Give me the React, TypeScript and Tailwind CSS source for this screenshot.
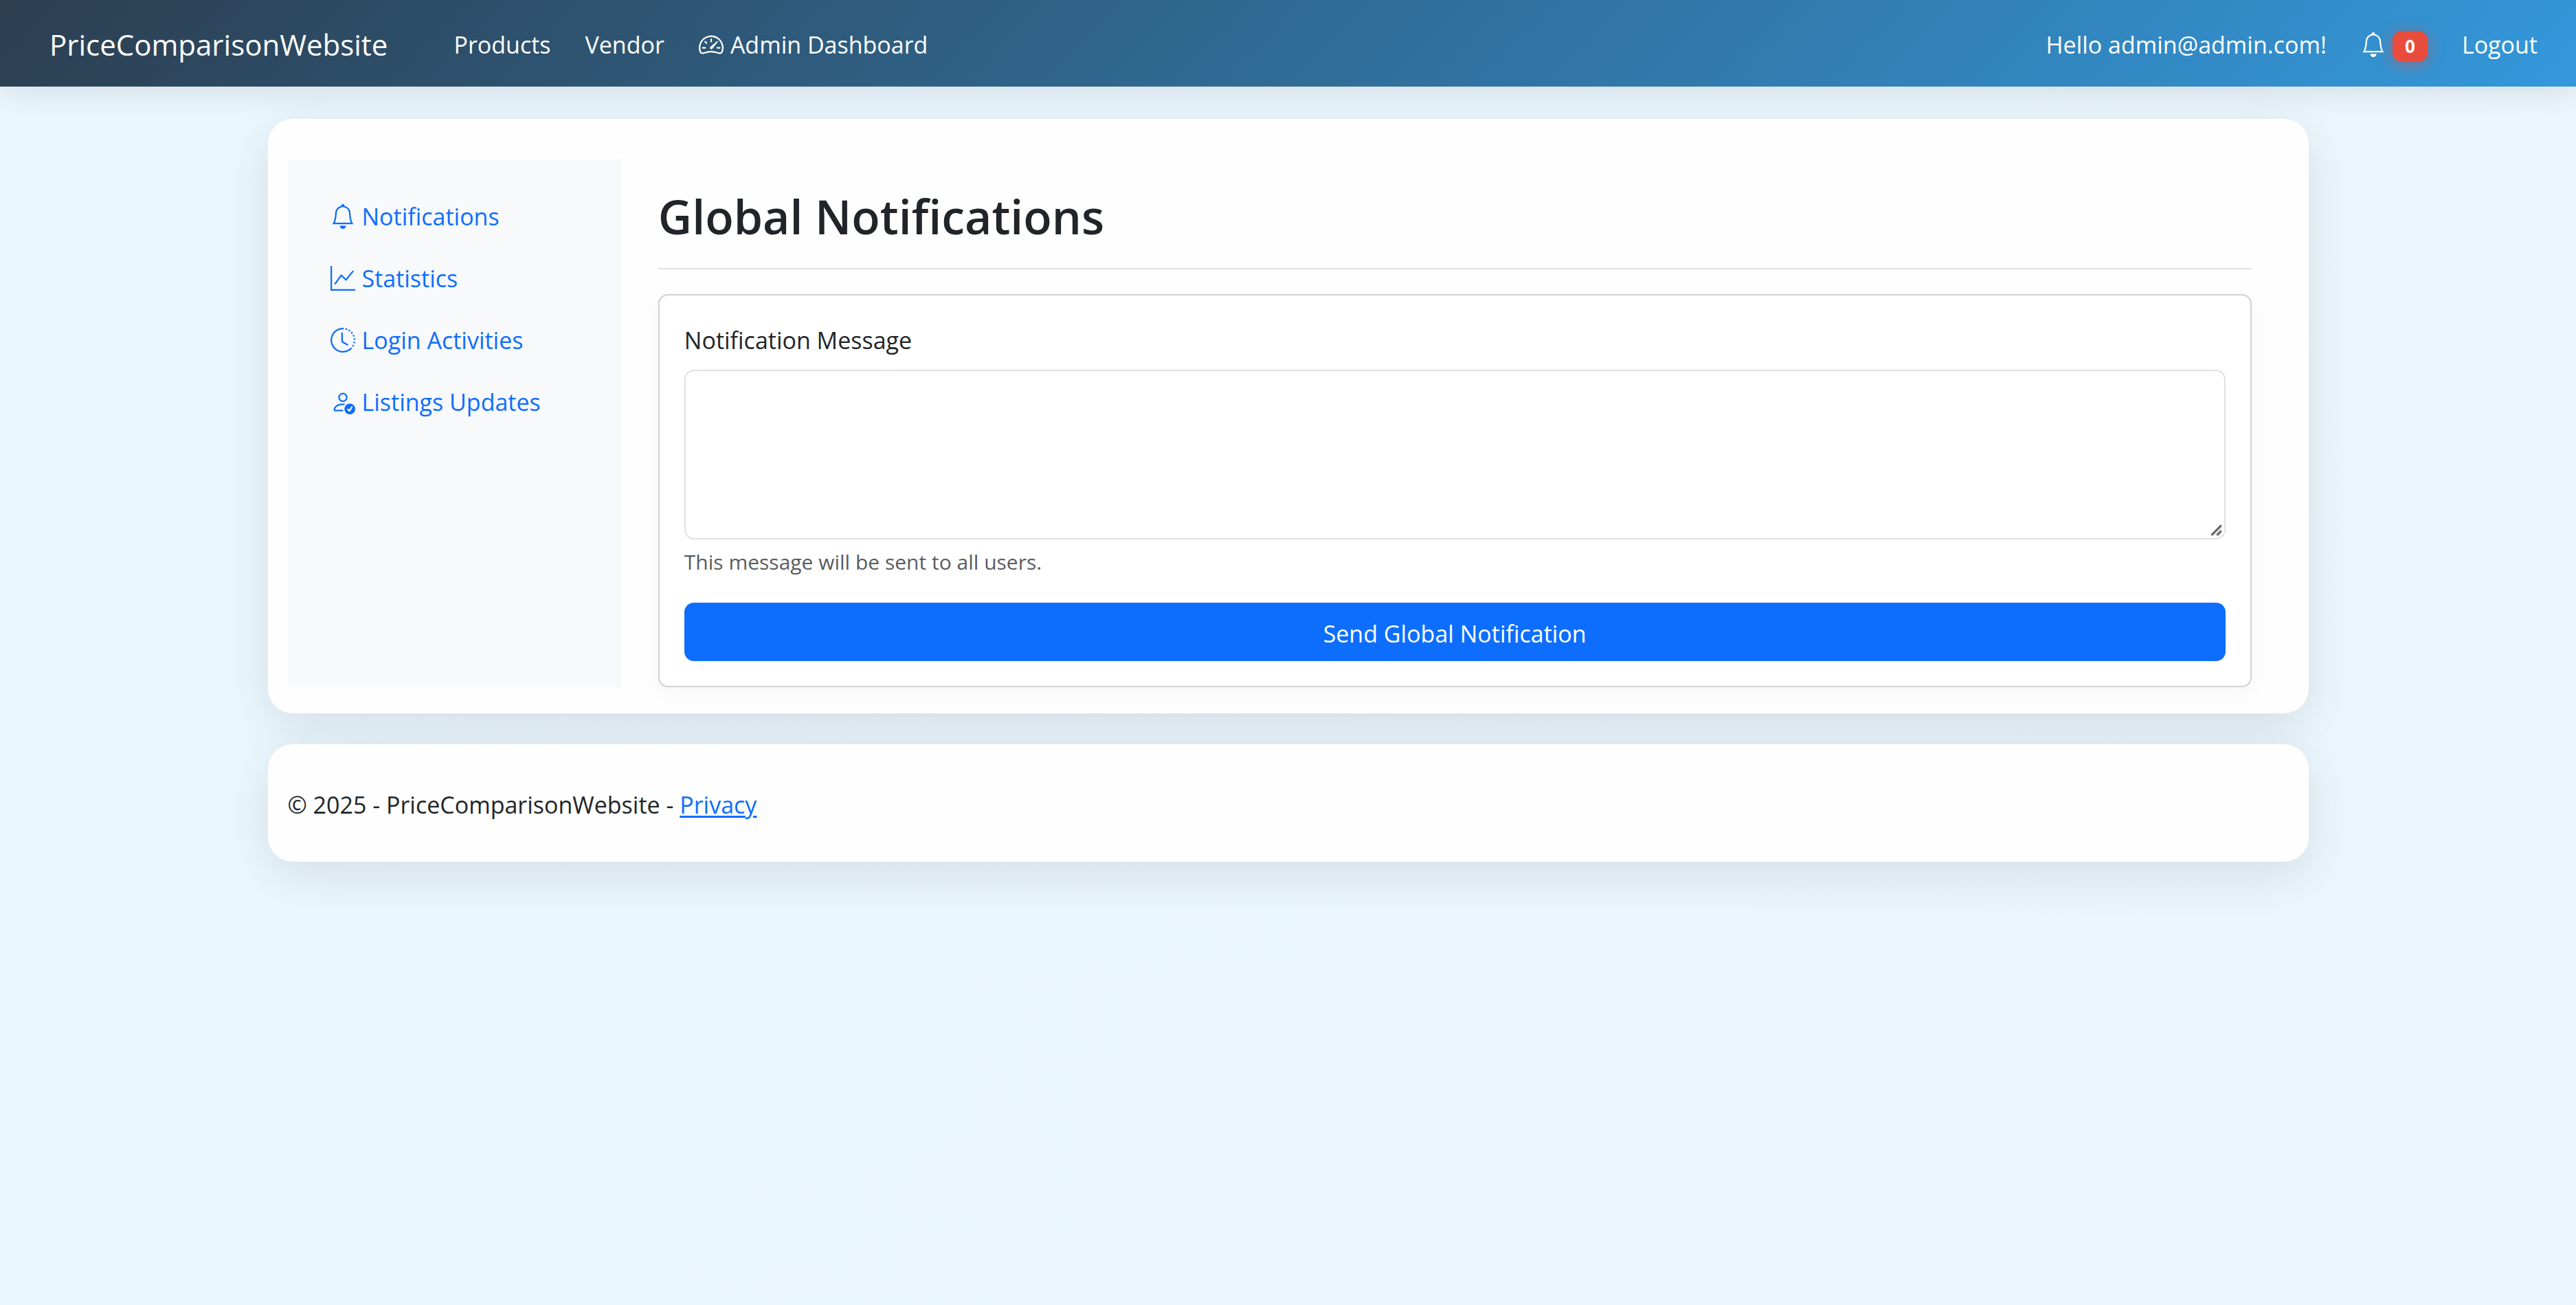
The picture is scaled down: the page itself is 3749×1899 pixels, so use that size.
import type { IconType } from "react-icons";
import { BsBell, BsClockHistory, BsGraphUp, BsPersonCheck, BsSpeedometer2 } from "react-icons/bs";

const sidebarLinks: { label: string; Icon: IconType }[] = [
  { label: "Notifications", Icon: BsBell },
  { label: "Statistics", Icon: BsGraphUp },
  { label: "Login Activities", Icon: BsClockHistory },
  { label: "Listings Updates", Icon: BsPersonCheck },
];

function Navbar() {
  return (
    <header className="relative flex h-[126px] items-center justify-between bg-[linear-gradient(135deg,#2c3e50,#3498db)] pt-1 pr-14 pl-[72px] text-white shadow-[0_9px_45px_rgba(0,0,0,0.1)]">
      <div className="flex items-center">
        <a href="#" className="mr-24 text-[42px] leading-[54px]">
          PriceComparisonWebsite
        </a>
        <nav aria-label="Main" className="flex items-center gap-[50px]">
          <a href="#products">Products</a>
          <a href="#vendor">Vendor</a>
          <a href="#admin" className="flex items-center gap-[10px]">
            <BsSpeedometer2 className="size-9" />
            Admin Dashboard
          </a>
        </nav>
      </div>
      <div className="flex items-center gap-[50px]">
        <a href="#account">Hello admin@admin.com!</a>
        <a href="#notifications" aria-label="Notifications" className="flex items-center gap-[10px]">
          <BsBell className="size-9" />
          <span className="mt-1 flex h-[45px] w-[51px] items-center justify-center rounded-[14px] bg-[#e74c3c] text-[26px] leading-none font-bold shadow-[0_4px_22px_rgba(231,76,60,0.5)]">
            0
          </span>
        </a>
        <button type="button">Logout</button>
      </div>
    </header>
  );
}

function Sidebar() {
  return (
    <nav aria-label="Admin" className="w-1/6 shrink-0 bg-[#f8f9fb] px-[62px] pt-[38px]">
      <ul>
        {sidebarLinks.map(({ label, Icon }) => (
          <li key={label}>
            <a href="#" className="flex items-center gap-[10px] py-[18px] whitespace-nowrap text-[#0d6efd]">
              <Icon className="size-9 shrink-0" />
              {label}
            </a>
          </li>
        ))}
      </ul>
    </nav>
  );
}

function ResizeGrip() {
  return (
    <svg
      viewBox="0 0 18 18"
      className="pointer-events-none absolute right-1 bottom-1 size-[18px]"
      fill="none"
      strokeLinecap="round"
      aria-hidden="true"
    >
      <path d="M4 16 16 4M12 16l4-4" stroke="#cfcfcf" strokeWidth="2" />
      <path d="M2 15 15 2M10 15l5-5" stroke="#5f5f5f" strokeWidth="2.6" />
    </svg>
  );
}

function NotificationForm() {
  return (
    <form className="rounded-[14px] border-2 border-[#d2d2d2] bg-white px-9 pt-[38px] pb-9 shadow-[0_9px_27px_rgba(0,0,0,0.04)]">
      <label htmlFor="message" className="mb-4 block">
        Notification Message
      </label>
      <div className="relative">
        <textarea
          id="message"
          aria-describedby="message-help"
          className="block h-[247px] w-full resize-none rounded-[14px] border-2 border-[#dee2e6] bg-white px-[27px] py-[14px] outline-none"
        />
        <ResizeGrip />
      </div>
      <p id="message-help" className="mt-[9px] text-[30px] leading-[47px] text-[#595c5f]">
        This message will be sent to all users.
      </p>
      <button type="button" className="mt-9 block h-[85px] w-full rounded-[14px] bg-[#0d6efd] pt-1 text-white">
        Send Global Notification
      </button>
    </form>
  );
}

export default function App() {
  return (
    <div className="min-h-screen bg-[linear-gradient(135deg,#ebf7ff,#ebf6fc)] font-['Open_Sans','Noto_Sans',sans-serif] text-[34px] leading-[54px] text-[#212529]">
      <Navbar />
      <main className="mx-auto mt-[47px] flex w-full max-w-[2970px] rounded-[36px] bg-[#fefefe] px-[29px] pt-[59px] pb-[38px] shadow-[0_18px_72px_rgba(0,0,0,0.1)]">
        <Sidebar />
        <div className="flex-1 px-[54px] pt-10">
          <h1 className="mb-9 border-b-2 border-[#dee2e6] pb-8 text-[68px] leading-[86px] font-semibold">
            Global Notifications
          </h1>
          <NotificationForm />
        </div>
      </main>
      <footer className="relative mx-auto mt-[45px] w-full max-w-[2970px] rounded-[36px] bg-[#fefefe] px-[29px] pt-[61px] pb-14 shadow-[0_18px_72px_rgba(0,0,0,0.1)]">
        © 2025 - PriceComparisonWebsite -{" "}
        <a href="#privacy" className="text-[#0d6efd] underline decoration-[3px] underline-offset-[3px]">
          Privacy
        </a>
      </footer>
    </div>
  );
}
